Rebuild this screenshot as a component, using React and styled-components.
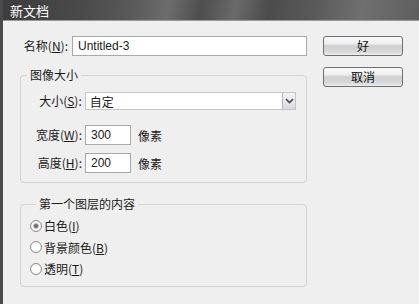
import React from "react";
import styled, { createGlobalStyle } from "styled-components";

const Global = createGlobalStyle`
  html, body { margin: 0; padding: 0; background: #efefef; }
  body { font-family: "Liberation Sans", "Noto Sans CJK SC", sans-serif; font-size: 12px; color: #1a1a1a; }
`;

const Window = styled.div`
  width: 419px;
  height: 304px;
  display: flex;
  flex-direction: column;
  background: #efefef;
  border-left: 3px solid #4a4a4a;
  box-sizing: border-box;
  overflow: hidden;
`;

const TitleBar = styled.div`
  height: 20px;
  display: flex;
  align-items: center;
  margin-left: -3px;
  padding-left: 10px;
  color: #fff;
  font-family: "Noto Sans CJK SC", sans-serif;
  font-size: 13px;
  background: linear-gradient(100deg, #3c3c3c 0%, #4a4a4a 20%, #5c5c5c 33%, #6d6d6d 40%, #4e4e4e 48%, #6a6a6a 56%, #4c4c4c 64%, #5a5a5a 75%, #707070 86%, #5e5e5e 100%);
  border-bottom: 1px solid #9a9a9a;
`;

const Body = styled.div`
  flex: 1;
  display: flex;
  gap: 16px;
  padding: 15px 0 0 17px;
`;

const Main = styled.div`
  width: 287px;
  display: flex;
  flex-direction: column;
`;

const Side = styled.div`
  display: flex;
  flex-direction: column;
  gap: 11px;
`;

const Row = styled.div`
  display: flex;
  align-items: center;
  gap: ${(p) => p.$gap || 3}px;
  margin-top: ${(p) => p.$top || 0}px;
`;

const Label = styled.label`
  width: ${(p) => p.$w}px;
  text-align: right;
  font-family: "Noto Sans CJK SC", sans-serif;
  font-size: 12px;
  line-height: 14px;
  white-space: nowrap;
  u { text-decoration: underline; text-underline-offset: 1px; }
`;

const TextInput = styled.div`
  width: ${(p) => p.$w}px;
  height: 20px;
  box-sizing: border-box;
  border: 1px solid #a9a9a9;
  background: #fff;
  display: flex;
  align-items: center;
  padding-left: 5px;
  font-size: 12px;
`;

const Unit = styled.span`
  font-family: "Noto Sans CJK SC", sans-serif;
  margin-left: 4px;
`;

const Select = styled.div`
  width: 212px;
  height: 18px;
  box-sizing: border-box;
  border: 1px solid #c4c4c4;
  background: #fff;
  display: flex;
  align-items: center;
  justify-content: space-between;
  padding-left: 4px;
  font-family: "Noto Sans CJK SC", sans-serif;
`;

const Arrow = styled.span`
  width: 13px;
  height: 16px;
  box-sizing: border-box;
  border-left: 1px solid #b5b5b5;
  background: linear-gradient(#f4f4f4, #d9dbe0);
  display: flex;
  align-items: center;
  justify-content: center;
`;

const Group = styled.fieldset`
  margin: ${(p) => p.$top}px 0 0 0;
  padding: ${(p) => p.$pad};
  border: 1px solid #d3d3d3;
  border-radius: 4px;
  min-width: 0;
  display: flex;
  flex-direction: column;
`;

const Legend = styled.legend`
  padding: 0 3px;
  margin-left: 6px;
  font-family: "Noto Sans CJK SC", sans-serif;
  font-size: 12px;
  line-height: 14px;
`;

const RadioRow = styled.label`
  display: flex;
  align-items: center;
  gap: 2px;
  height: 21.5px;
  font-family: "Noto Sans CJK SC", sans-serif;
  u { text-decoration: underline; text-underline-offset: 1px; }
`;

const Circle = styled.span`
  width: 12px;
  height: 12px;
  box-sizing: border-box;
  border-radius: 50%;
  border: 1px solid #8c8c8c;
  background: radial-gradient(circle, #ffffff 40%, #e8e8e8 100%);
  display: flex;
  align-items: center;
  justify-content: center;
  &::after {
    content: "";
    width: 4px;
    height: 4px;
    border-radius: 50%;
    background: ${(p) => (p.$on ? "#6e6e6e" : "transparent")};
    box-shadow: ${(p) => (p.$on ? "0 0 0 1px #bdbdbd" : "none")};
  }
`;

const Button = styled.button`
  width: 80px;
  height: 20px;
  padding: 0;
  border: 1px solid #6f6f6f;
  border-radius: 3px;
  background: linear-gradient(#fafafa 0%, #f0f0f0 35%, #cfd0d2 50%, #d6d7d9 80%, #ececec 100%);
  font-family: "Noto Sans CJK SC", sans-serif;
  font-size: 12px;
  color: #111;
  line-height: 16px;
`;

const Radio = ({ on, children }) => (
  <RadioRow>
    <Circle $on={on} />
    <span>{children}</span>
  </RadioRow>
);

export default function App() {
  return (
    <>
      <Global />
      <Window>
        <TitleBar>新文档</TitleBar>
        <Body>
          <Main>
            <Row $gap={4}>
              <Label $w={48}>名称(<u>N</u>):</Label>
              <TextInput $w={235}>Untitled-3</TextInput>
            </Row>
            <Group $top={12} $pad="10px 10px 9px 0">
              <Legend>图像大小</Legend>
              <Row>
                <Label $w={61}>大小(<u>S</u>):</Label>
                <Select>
                  <span>自定</span>
                  <Arrow>
                    <svg width="9" height="6" viewBox="0 0 9 6">
                      <path d="M1 1 L4.5 4.5 L8 1" fill="none" stroke="#3c4a63" strokeWidth="1.6" />
                    </svg>
                  </Arrow>
                </Select>
              </Row>
              <Row $top={15}>
                <Label $w={61}>宽度(<u>W</u>):</Label>
                <TextInput $w={46}>300</TextInput>
                <Unit>像素</Unit>
              </Row>
              <Row $top={8}>
                <Label $w={61}>高度(<u>H</u>):</Label>
                <TextInput $w={46}>200</TextInput>
                <Unit>像素</Unit>
              </Row>
            </Group>
            <Group $top={14} $pad="4px 0 6px 9px">
              <Legend>第一个图层的内容</Legend>
              <Radio on>白色(<u>I</u>)</Radio>
              <Radio>背景颜色(<u>B</u>)</Radio>
              <Radio>透明(<u>T</u>)</Radio>
            </Group>
          </Main>
          <Side>
            <Button>好</Button>
            <Button>取消</Button>
          </Side>
        </Body>
      </Window>
    </>
  );
}
